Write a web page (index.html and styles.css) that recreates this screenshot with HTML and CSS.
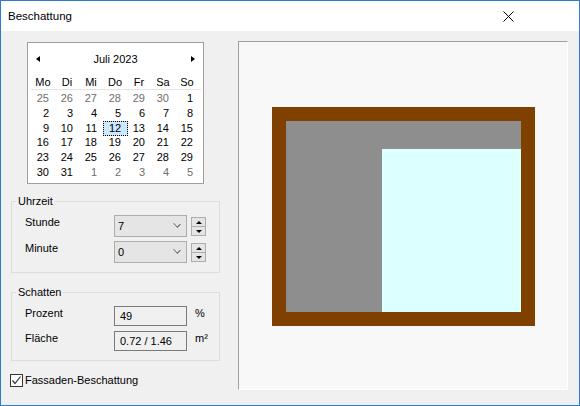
FILE: index.html
```html
<!DOCTYPE html>
<html lang="de">
<head>
    <meta charset="UTF-8">
    <title>Beschattung</title>
    <link rel="stylesheet" href="styles.css">
</head>
<body>
<div class="window">
    <div class="titlebar">
        <span class="title">Beschattung</span>
        <svg class="close" width="11" height="11" viewBox="0 0 11 11">
            <path d="M0.5 0.5 L10.5 10.5 M10.5 0.5 L0.5 10.5" stroke="#000" stroke-width="1" fill="none"/>
        </svg>
    </div>

    <div class="content">
        <div class="left">
            <div class="calendar">
                <div class="cal-head">
                    <span class="arrow-left"></span>
                    <span>Juli 2023</span>
                    <span class="arrow-right"></span>
                </div>
                <div class="cal-days">
                    <span>Mo</span><span>Di</span><span>Mi</span><span>Do</span><span>Fr</span><span>Sa</span><span>So</span>
                </div>
                <div class="cal-grid">
                    <span class="other">25</span><span class="other">26</span><span class="other">27</span><span class="other">28</span><span class="other">29</span><span class="other">30</span><span>1</span>
                    <span>2</span><span>3</span><span>4</span><span>5</span><span>6</span><span>7</span><span>8</span>
                    <span>9</span><span>10</span><span>11</span><span class="today">12</span><span>13</span><span>14</span><span>15</span>
                    <span>16</span><span>17</span><span>18</span><span>19</span><span>20</span><span>21</span><span>22</span>
                    <span>23</span><span>24</span><span>25</span><span>26</span><span>27</span><span>28</span><span>29</span>
                    <span>30</span><span>31</span><span class="other">1</span><span class="other">2</span><span class="other">3</span><span class="other">4</span><span class="other">5</span>
                </div>
            </div>

            <fieldset class="group group-time">
                <legend>Uhrzeit</legend>
                <div class="row">
                    <label>Stunde</label>
                    <div class="combo"><span>7</span><span class="chev"></span></div>
                    <div class="spin"><div class="up"></div><div class="down"></div></div>
                </div>
                <div class="row">
                    <label>Minute</label>
                    <div class="combo"><span>0</span><span class="chev"></span></div>
                    <div class="spin"><div class="up"></div><div class="down"></div></div>
                </div>
            </fieldset>

            <fieldset class="group group-shadow">
                <legend>Schatten</legend>
                <div class="row">
                    <label>Prozent</label>
                    <div class="field">49</div>
                    <span class="unit">%</span>
                </div>
                <div class="row">
                    <label>Fläche</label>
                    <div class="field">0.72 / 1.46</div>
                    <span class="unit">m²</span>
                </div>
            </fieldset>

            <div class="check-row">
                <span class="checkbox">
                    <svg width="11" height="11" viewBox="0 0 11 11">
                        <path d="M1.5 5.5 L4 8.5 L9.5 1.5" stroke="#333" stroke-width="1.2" fill="none"/>
                    </svg>
                </span>
                <span>Fassaden-Beschattung</span>
            </div>
        </div>

        <div class="preview">
            <svg width="329" height="348" viewBox="0 0 329 348">
                <rect x="33" y="65" width="263" height="219" fill="#804000"/>
                <rect x="47" y="79" width="235" height="191" fill="#8e8e8e"/>
                <rect x="143" y="107" width="139" height="163" fill="#dcffff"/>
            </svg>
        </div>
    </div>
</div>
</body>
</html>
```

FILE: styles.css
```css
body {
    margin: 0;
    padding: 0;
    font-family: "Liberation Sans", Arial, sans-serif;
    font-size: 11px;
    color: #000;
}

.window {
    width: 580px;
    height: 406px;
    box-sizing: border-box;
    border: 1px solid #2b7bd3;
    background-color: #f0f0f0;
}

.titlebar {
    height: 30px;
    background-color: #fff;
    display: flex;
    align-items: center;
    justify-content: space-between;
    padding-left: 7px;
    font-size: 11.5px;
}

.close {
    margin-right: 65px;
}

.content {
    display: flex;
    padding: 10px 10px 0 10px;
}

.left {
    width: 209px;
}

/* month calendar */
.calendar {
    margin: 1px 0 0 16px;
    width: 177px;
    height: 142px;
    box-sizing: border-box;
    border: 1px solid #a0a0a0;
    background-color: #fff;
    padding: 0 3px;
}

.cal-head {
    height: 32px;
    display: flex;
    align-items: center;
    justify-content: space-between;
    padding: 0 5px;
}

.arrow-left {
    width: 0;
    height: 0;
    border-right: 4px solid #000;
    border-top: 3.5px solid transparent;
    border-bottom: 3.5px solid transparent;
}

.arrow-right {
    width: 0;
    height: 0;
    border-left: 4px solid #000;
    border-top: 3.5px solid transparent;
    border-bottom: 3.5px solid transparent;
}

.cal-days {
    display: grid;
    grid-template-columns: repeat(7, 24px);
    line-height: 14px;
    border-bottom: 1px solid #e3e3e3;
    margin: 0 -1px 0 0;
    padding-bottom: 0;
}

.cal-days span {
    text-align: center;
}

.cal-grid {
    display: grid;
    grid-template-columns: repeat(7, 24px);
    grid-auto-rows: 14.8px;
    line-height: 14.8px;
    padding-top: 1px;
}

.cal-grid span {
    text-align: right;
    padding-right: 6px;
}

.cal-grid .other {
    color: #6d6d6d;
}

.cal-grid .today {
    justify-self: center;
    width: 25px;
    height: 15px;
    box-sizing: border-box;
    padding: 0;
    text-align: center;
    line-height: 13px;
    background-color: #cce8ff;
    border: 1px dotted #000;
}

/* group boxes */
.group {
    margin: 0;
    padding: 7px 0 9px 13px;
    border: 1px solid #dcdcdc;
}

.group legend {
    padding: 0 2px;
    margin-left: -9px;
    line-height: 14px;
}

.group-time {
    margin-top: 10px;
}

.group-shadow {
    margin-top: 12px;
}

.row {
    display: flex;
    align-items: flex-start;
    line-height: 15px;
}

.group-time .row + .row {
    margin-top: 4px;
}

.group-shadow .row + .row {
    margin-top: 5px;
}

.row label {
    width: 89px;
}

.combo {
    width: 73px;
    height: 22px;
    box-sizing: border-box;
    border: 1px solid #adadad;
    background-color: #e5e5e5;
    display: flex;
    align-items: center;
    justify-content: space-between;
    padding: 0 6px 0 3px;
}

.chev {
    width: 5px;
    height: 5px;
    border-right: 1px solid #606060;
    border-bottom: 1px solid #606060;
    transform: rotate(45deg) scaleY(0.8);
    margin-top: -4px;
}

.spin {
    margin: 2px 0 0 4px;
    width: 15px;
}

.spin .up,
.spin .down {
    height: 9px;
    box-sizing: border-box;
    border: 1px solid #adadad;
    background-color: #e5e5e5;
    display: flex;
    align-items: center;
    justify-content: center;
}

.spin .up {
    height: 10px;
}

.spin .down {
    border-top: none;
}

.spin .up::after {
    content: "";
    border-bottom: 3px solid #000;
    border-left: 3px solid transparent;
    border-right: 3px solid transparent;
}

.spin .down::after {
    content: "";
    border-top: 3px solid #000;
    border-left: 3px solid transparent;
    border-right: 3px solid transparent;
}

.field {
    width: 73px;
    height: 20px;
    box-sizing: border-box;
    border: 1px solid #7a7a7a;
    background-color: #f0f0f0;
    line-height: 18px;
    padding-left: 5px;
}

.unit {
    margin-left: 8px;
}

/* checkbox */
.check-row {
    display: flex;
    align-items: center;
    margin: 13px 0 0 -1px;
    line-height: 13px;
}

.checkbox {
    width: 13px;
    height: 13px;
    box-sizing: border-box;
    border: 1px solid #333;
    background-color: #fff;
    margin-right: 2px;
    display: flex;
}

/* drawing area */
.preview {
    margin-left: 18px;
    width: 330px;
    height: 349px;
    box-sizing: border-box;
    border-top: 1px solid #a0a0a0;
    border-left: 1px solid #a0a0a0;
    border-right: 1px solid #fff;
    border-bottom: 1px solid #fff;
    background-color: #f8f8f8;
}

.preview svg {
    display: block;
}
```
